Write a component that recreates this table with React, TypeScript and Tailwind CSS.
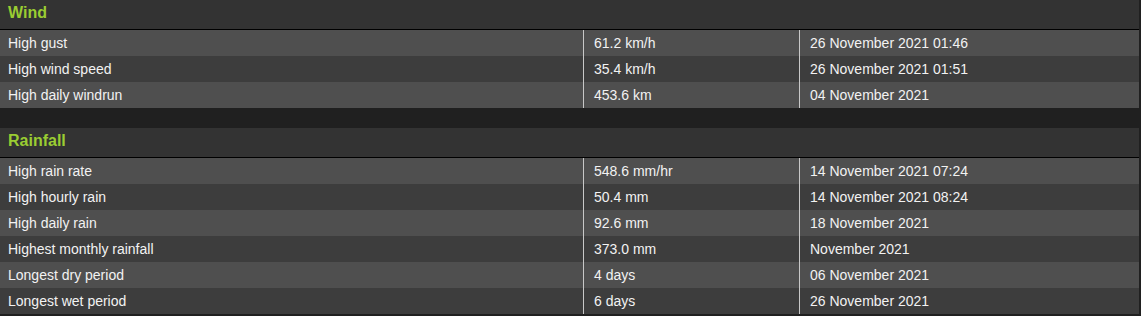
type Row = [string, string, string];

const wind: Row[] = [
  ['High gust', '61.2 km/h', '26 November 2021 01:46'],
  ['High wind speed', '35.4 km/h', '26 November 2021 01:51'],
  ['High daily windrun', '453.6 km', '04 November 2021'],
];

const rainfall: Row[] = [
  ['High rain rate', '548.6 mm/hr', '14 November 2021 07:24'],
  ['High hourly rain', '50.4 mm', '14 November 2021 08:24'],
  ['High daily rain', '92.6 mm', '18 November 2021'],
  ['Highest monthly rainfall', '373.0 mm', 'November 2021'],
  ['Longest dry period', '4 days', '06 November 2021'],
  ['Longest wet period', '6 days', '26 November 2021'],
];

function Section({ title, rows }: { title: string; rows: Row[] }) {
  return (
    <div>
      <div className="h-[30px] bg-[#333333] border-b border-black pl-2 pt-[3px]">
        <h2 className="text-[16px] leading-[20px] font-bold text-[#9acd32]">{title}</h2>
      </div>
      {rows.map((r, i) => (
        <div
          key={r[0]}
          className={`flex h-[26px] items-center text-[14px] text-[#f2f2f2] ${
            i % 2 === 0 ? 'bg-[#4f4f4f]' : 'bg-[#3d3d3d]'
          }`}
        >
          <div className="w-[583px] pl-2">{r[0]}</div>
          <div className="w-[216px] h-full flex items-center border-l border-[#c8c8c8] pl-[10px]">{r[1]}</div>
          <div className="flex-1 h-full flex items-center border-l border-[#c8c8c8] pl-[10px]">{r[2]}</div>
        </div>
      ))}
    </div>
  );
}

export default function App() {
  return (
    <div className="min-h-[316px] w-[1141px] bg-[#202020] font-['Liberation_Sans',Arial,sans-serif]">
      <div className="w-[1139px]">
        <Section title="Wind" rows={wind} />
        <div className="h-[20px]" />
        <Section title="Rainfall" rows={rainfall} />
      </div>
    </div>
  );
}
